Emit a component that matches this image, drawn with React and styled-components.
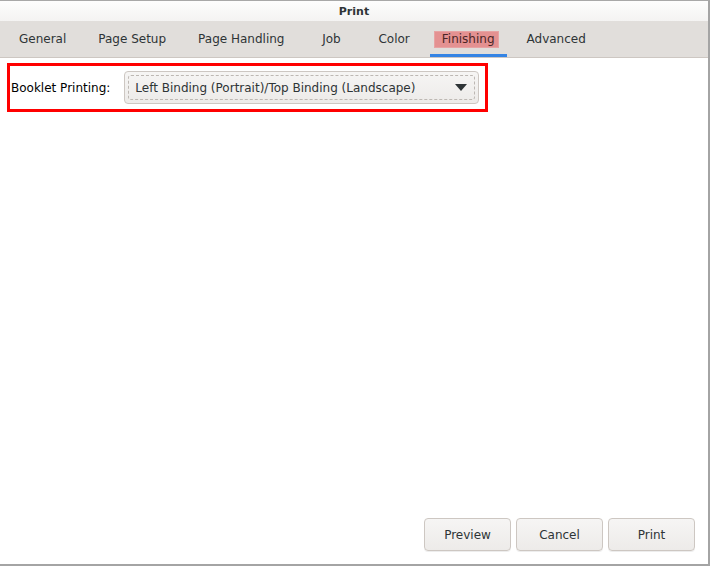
import styled, { createGlobalStyle } from 'styled-components';

const GlobalStyle = createGlobalStyle`
	html, body {
		margin: 0;
		padding: 0;
		background: #ffffff;
	}
	body {
		font-family: "DejaVu Sans", "Noto Sans", sans-serif;
		font-size: 12px;
		color: #2e3436;
	}
`;

const Window = styled.div`
	width: 710px;
	height: 566px;
	box-sizing: border-box;
	border-top: 1px solid #a8a8a8;
	border-right: 2px solid #a4a4a4;
	border-bottom: 2px solid #a4a4a4;
	display: flex;
	flex-direction: column;
	background: #ffffff;
`;

const TitleBar = styled.div`
	height: 20px;
	display: flex;
	align-items: center;
	justify-content: center;
	background: linear-gradient(#fdfdfd, #f4f3f2);
	font-weight: bold;
	font-size: 11px;
	color: #2e3436;
`;

const TabBar = styled.div`
	height: 36px;
	display: flex;
	align-items: stretch;
	gap: 8px;
	padding-left: 7px;
	background: #e1dedb;
	border-bottom: 1px solid #cdc7c2;
`;

const Tab = styled.div`
	position: relative;
	display: flex;
	align-items: center;
	justify-content: center;
	min-width: 54px;
	box-sizing: border-box;
	padding: 0 12px;
	color: #2e3436;

	${({ $active }) =>
		$active &&
		`
		&::after {
			content: '';
			position: absolute;
			left: 0;
			right: 0;
			bottom: 0;
			height: 3px;
			background: #3584e4;
		}
	`}
`;

const Highlight = styled.span`
	background: #e49191;
	border: 1px solid #e7a3a3;
	color: #4a2626;
	padding: 0 3px 0 7px;
	margin: 0 -4px 0 -8px;
	line-height: 15px;
`;

const Content = styled.div`
	flex: 1;
	display: flex;
	flex-direction: column;
	padding: 5px 0 0 7px;
`;

const OptionBox = styled.div`
	width: 481px;
	height: 49px;
	box-sizing: border-box;
	border: 3px solid #ff0000;
	display: flex;
	align-items: center;
	gap: 14px;
	padding-left: 1px;
`;

const Label = styled.span`
	color: #000000;
	white-space: nowrap;
	flex-shrink: 0;
`;

const Combo = styled.div`
	width: 355px;
	height: 33px;
	box-sizing: border-box;
	border: 1px solid #cdc7c2;
	border-radius: 4px;
	background: linear-gradient(#f6f5f4, #edebe9);
	padding: 3px;
	display: flex;
	flex-shrink: 0;
`;

const ComboFocus = styled.div`
	flex: 1;
	border: 1px dashed #bdb8b3;
	border-radius: 3px;
	display: flex;
	align-items: center;
	justify-content: space-between;
	padding: 0 7px 0 6px;
	color: #2e3436;
	white-space: nowrap;
`;

const Arrow = styled.svg`
	width: 12px;
	height: 7px;
`;

const Footer = styled.div`
	margin-top: auto;
	display: flex;
	justify-content: flex-end;
	gap: 5px;
	padding: 0 13px 13px 0;
`;

const Button = styled.button`
	width: 87px;
	height: 33px;
	border: 1px solid #cdc7c2;
	border-radius: 4px;
	background: linear-gradient(#f6f5f4, #edebe9);
	font-family: inherit;
	font-size: 12px;
	color: #2e3436;
	box-shadow: 0 1px 0 rgba(0, 0, 0, 0.07);
`;

const tabs = ['General', 'Page Setup', 'Page Handling', 'Job', 'Color', 'Finishing', 'Advanced'];

export default function App() {
	return (
		<>
			<GlobalStyle />
			<Window>
				<TitleBar>Print</TitleBar>
				<TabBar>
					{tabs.map((t) =>
						t === 'Finishing' ? (
							<Tab key={t} $active>
								<Highlight>{t}</Highlight>
							</Tab>
						) : (
							<Tab key={t}>{t}</Tab>
						)
					)}
				</TabBar>
				<Content>
					<OptionBox>
						<Label>Booklet Printing:</Label>
						<Combo>
							<ComboFocus>
								<span>Left Binding (Portrait)/Top Binding (Landscape)</span>
								<Arrow viewBox="0 0 12 7">
									<path d="M0 0 L12 0 L6 7 Z" fill="#2e3436" />
								</Arrow>
							</ComboFocus>
						</Combo>
					</OptionBox>
				</Content>
				<Footer>
					<Button>Preview</Button>
					<Button>Cancel</Button>
					<Button>Print</Button>
				</Footer>
			</Window>
		</>
	);
}
